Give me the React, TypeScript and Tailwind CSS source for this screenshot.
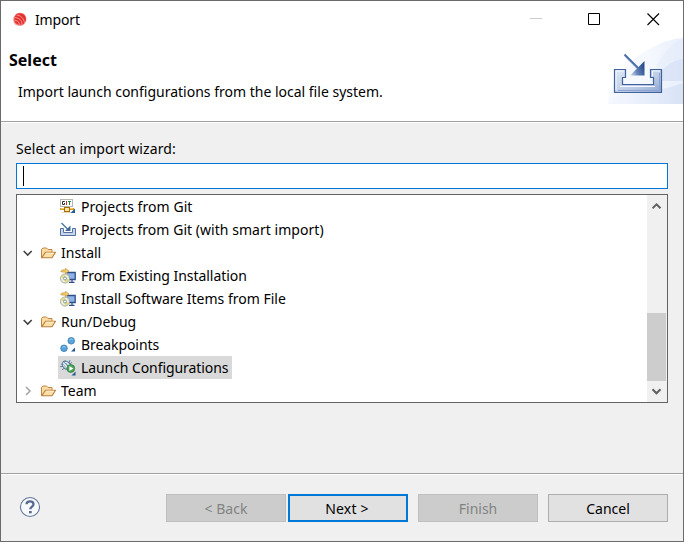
import React from "react";

const svg16 = { width: 16, height: 16, viewBox: "0 0 16 16", className: "block shrink-0" };

function AppLogo() {
  return (
    <svg width="16" height="16" viewBox="0 0 16 16" className="block shrink-0">
      <path d="M4.500 1.500C8 0 12 .8 13.700 4c1.500 3 .5 6.500-2 8.700-2.500 1.700-6 1.700-8.500-.2C1 10.500.8 7 1.600 5Z" fill="#f19a97" />
      <path d="M4.500 2C8 .3 12 1.300 13.400 4.500c1.200 2.800.3 5.500-1.600 7.300C9 13.300 5.500 13 3.600 11 1.800 9 2 4.500 4.500 2Z" fill="#e5322f" />
      <g fill="none" stroke="#f8aeaa" strokeWidth="0.8">
        <path d="M4.500 3c4.200.2 7.300 3.400 8 7.800" />
        <path d="M3 5.600c4 0 6.900 2.800 7 6.600" />
        <path d="M3 8.400c2.700.2 4.300 1.800 4.400 4.200" />
      </g>
    </svg>
  );
}

function ImportBanner() {
  return (
    <svg width="75" height="66" viewBox="0 0 75 66" className="block">
      <defs>
        <linearGradient id="wave" x1="0" x2="1" y1="0" y2="0">
          <stop offset="0" stopColor="#f6f9ff" />
          <stop offset="0.55" stopColor="#f5f8fe" />
          <stop offset="1" stopColor="#e8effb" />
        </linearGradient>
        <linearGradient id="wave2" x1="0" x2="1" y1="0" y2="0">
          <stop offset="0" stopColor="#f4f7fe" />
          <stop offset="1" stopColor="#cfdcf4" />
        </linearGradient>
        <linearGradient id="tray" x1="0" x2="1" y1="0" y2="1">
          <stop offset="0" stopColor="#dfe8f5" />
          <stop offset="0.6" stopColor="#bccbe6" />
          <stop offset="1" stopColor="#8ca5d0" />
        </linearGradient>
        <linearGradient id="arrow" x1="0" x2="1" y1="1" y2="0.6">
          <stop offset="0" stopColor="#d6e3f5" />
          <stop offset="0.5" stopColor="#6484b8" />
          <stop offset="1" stopColor="#2e5190" />
        </linearGradient>
      </defs>
      <path d="M0 66C1 48 13 31 30 18 46 7 60 1 75 0V66Z" fill="url(#wave)" />
      <path d="M42 43C48 27 56 9 75 1V43Z" fill="#dfe8f9" opacity=".3" />
      <path d="M48 43C53 30 63 23 75 21V43Z" fill="#cfdcf5" opacity=".5" />
      <path d="M0 66C3 61 8 57 18 55 40 55 58 51 75 45V66Z" fill="url(#wave2)" opacity=".65" />
      <path d="M6.500 31.500H17.500V39.500H14.500V46.500H45.500V39.500H42.500V31.500H53.500V54.500H6.500Z" fill="url(#tray)" stroke="#41629b" strokeWidth="1.200" />
      <path d="M8 52V33H16M44.500 38V33H52M12 48.500H47" fill="none" stroke="#f4f7fd" />
      <path d="M10 52.500H51.500V35" fill="none" stroke="#8ba4cf" />
      <path d="M16.500 16.500 32 32" stroke="#496da7" strokeWidth="2" />
      <path d="M16.500 18.500 29 31" stroke="#bed0e8" strokeWidth=".8" />
      <path d="M36.500 23V37.500H22Z" fill="url(#arrow)" />
    </svg>
  );
}

function GitIcon() {
  return (
    <svg {...svg16}>
      <rect x=".5" y=".5" width="12" height="7" fill="#fff" stroke="#b5b8ab" />
      <path d="M4.800 2.500H2.500V5.500H4.500V4" fill="none" stroke="#303030" />
      <path d="M6.500 2v4" stroke="#c4302b" />
      <path d="M8 2.500h3M9.500 2.500V6" fill="none" stroke="#238a42" />
      <path d="M0 10h14" stroke="#d79a24" strokeWidth="2" />
      <path d="M1 9.500h12" stroke="#f5c95b" strokeWidth="1" />
      <rect x="4.500" y="8.500" width="5" height="4" fill="#ffe596" stroke="#a76913" />
      <path d="M2 13.500h9" stroke="#d8c69d" strokeWidth=".7" />
      <path d="M15 9.500V14H10.500Z" fill="#255a94" />
    </svg>
  );
}

function ImportIcon() {
  return (
    <svg {...svg16}>
      <path d="M.5 6.500H3.500V10.500H12.500V6.500H15.500V13.500H.5Z" fill="#c9d5eb" stroke="#54709f" />
      <path d="M1.500 1 8 7.500" stroke="#456fa0" strokeWidth="1.300" />
      <path d="M10.500 3.500V9H5Z" fill="#3a6a9d" />
    </svg>
  );
}

function InstallIcon() {
  return (
    <svg {...svg16}>
      <path d="M6.500 4.500H15.200V11.500H8" fill="#8fb3e8" stroke="#304f88" strokeWidth="1.300" />
      <path d="M9 14.300h5.500M12 12v2" stroke="#304f88" strokeWidth="1.200" />
      <circle cx="5" cy="10.500" r="4.500" fill="#edf0df" stroke="#96a38b" strokeWidth=".9" />
      <path d="M1.300 10C1.500 8 3 6.700 5 6.700V10Z" fill="#eadb7e" />
      <path d="M8.700 11C8.500 13 7 14.300 5 14.300V11Z" fill="#eadb7e" />
      <circle cx="5" cy="10.500" r="1.500" fill="#fff" stroke="#65848e" strokeWidth=".8" />
      <path d="M.8 3.500 2.200 1.900H5.500V.4L9 3 5.500 5.500V4H2.200Z" fill="#f4d36f" stroke="#c08c2c" strokeWidth=".7" />
    </svg>
  );
}

function BreakpointsIcon() {
  return (
    <svg {...svg16}>
      <circle cx="11.200" cy="3.800" r="3.300" fill="#5aa3d8" stroke="#367db5" strokeWidth=".8" />
      <circle cx="4" cy="11.300" r="3.300" fill="#5aa3d8" stroke="#367db5" strokeWidth=".8" />
      <path d="M9.300 3.100c.8-1.300 2.700-1.500 3.500-.2M2.200 10.600c.8-1.300 2.700-1.500 3.500-.2" stroke="#9acbea" fill="none" />
      <path d="M15 10.500v4h-4Z" fill="#255a94" />
    </svg>
  );
}

function LaunchIcon() {
  return (
    <svg {...svg16}>
      <ellipse cx="6.500" cy="5.300" rx="3.500" ry="4.700" transform="rotate(-45 6.500 5.300)" fill="#e6eff6" stroke="#5b7c9e" />
      <path d="M1 4 3.500 4.500M5 0l.3 2M2 9.500l2.500-1M10 0 9 3M3 1l7.500 8M0 6.500h3M12 2.500 9.500 4" stroke="#486a8f" strokeWidth=".8" />
      <path d="M6 3l3 4M4 5l3 4" stroke="#7896b3" strokeWidth=".8" />
      <circle cx="10.800" cy="8.500" r="3.900" fill="#48a354" stroke="#2a7d3c" strokeWidth=".7" />
      <path d="M9.400 6v5l4-2.500Z" fill="#fff" />
      <path d="M15.500 11.500V15.500h-4Z" fill="#255a94" />
    </svg>
  );
}

function FolderIcon() {
  return (
    <svg {...svg16}>
      <path d="M1.500 12.500V4.500L3 3h3.500L8 4.500h4v3" fill="#fbdca4" stroke="#c08543" />
      <path d="M1.700 12.700 5.500 7.200h10L12 12.700Z" fill="#fbdfa6" stroke="#b87d3d" strokeWidth="1.100" strokeLinejoin="round" />
      <path d="M6 8.200h8" stroke="#fff0c8" />
    </svg>
  );
}

function TreeChevron({ open }: { open: boolean }) {
  return (
    <svg width="10" height="10" viewBox="0 0 10 10" className="block shrink-0">
      {open ? (
        <path d="M.7 3 4.700 7 8.700 3" fill="none" stroke="#404040" strokeWidth="1.600" />
      ) : (
        <path d="M3 1 7 5 3 9" fill="none" stroke="#a3a3a3" strokeWidth="1.500" />
      )}
    </svg>
  );
}

function Group({ label, open = true }: { label: string; open?: boolean }) {
  return (
    <div className="flex h-[23px] items-center pl-[6px]">
      <TreeChevron open={open} />
      <span className="ml-[7px]"><FolderIcon /></span>
      <span className="ml-[5px]">{label}</span>
    </div>
  );
}

function Item({ icon, label, selected = false, spacing = "" }: { icon: React.ReactNode; label: string; selected?: boolean; spacing?: string }) {
  return (
    <div className="flex h-[23px] pl-[41px]">
      <div className={`flex items-center pl-[2px] pr-[3px] ${selected ? "w-[174px] bg-[#d9d9d9]" : ""}`}>
        {icon}
        <span className={`ml-[5px] ${spacing}`}>{label}</span>
      </div>
    </div>
  );
}

function ScrollArrow({ up = false }: { up?: boolean }) {
  return (
    <svg width="10" height="8" viewBox="0 0 10 8" className="block">
      <path d={up ? "M.5 6.300 4.500 2.300 8.500 6.300" : "M.5 1.300 4.500 5.300 8.500 1.300"} fill="none" stroke="#606060" strokeWidth="2" />
    </svg>
  );
}

export default function App() {
  return (
    <div className="flex h-[542px] w-[684px] flex-col whitespace-nowrap border border-[#6b6b6b] bg-[#f0f0f0] font-['Noto_Sans','Open_Sans',sans-serif] text-[14px] leading-5 text-black">
      <header className="flex h-[120px] shrink-0 flex-col bg-white">
        <div className="flex h-[37px] shrink-0 items-center pl-[11px]">
          <AppLogo />
          <span className="ml-[7px] tracking-[-0.15px]">Import</span>
          <div className="ml-auto flex items-center gap-[46px] pr-[23px]">
            <svg width="13" height="13" viewBox="0 0 13 13"><path d="M1 5.500h12" stroke="#ccc" /></svg>
            <svg width="13" height="13" viewBox="0 0 13 13"><path d="M.5.5h11v11H.5Z" fill="none" stroke="#000" /></svg>
            <svg width="13" height="13" viewBox="0 0 13 13"><path d="M.5.5 12 12M12 .5.5 12" stroke="#000" strokeWidth="1.100" /></svg>
          </div>
        </div>
        <div className="flex flex-1 justify-between">
          <div className="pt-3">
            <h1 className="pl-2 text-[16px] font-bold leading-5">Select</h1>
            <p className="mt-3 pl-[17px]">Import launch configurations from the local file system.</p>
          </div>
          <ImportBanner />
        </div>
      </header>
      <main className="flex h-[352px] shrink-0 flex-col border-t border-[#a0a0a0]">
        <div className="h-px shrink-0 bg-white" />
        <div className="px-[15px] pt-4">
          <label className="block h-6 tracking-[0.08px]">Select an import wizard:</label>
          <div className="flex h-[26px] items-center border border-[#0078d7] bg-white pl-[6px]">
            <div className="h-5 w-px bg-black" />
          </div>
          <div className="mt-[5px] flex h-[209px] border border-[#646464] bg-white">
            <div className="flex-1">
              <Item icon={<GitIcon />} label="Projects from Git" spacing="tracking-[0.06px]" />
              <Item icon={<ImportIcon />} label="Projects from Git (with smart import)" spacing="tracking-[0.04px]" />
              <Group label="Install" />
              <Item icon={<InstallIcon />} label="From Existing Installation" spacing="tracking-[-0.04px]" />
              <Item icon={<InstallIcon />} label="Install Software Items from File" />
              <Group label="Run/Debug" />
              <Item icon={<BreakpointsIcon />} label="Breakpoints" spacing="tracking-[-0.08px]" />
              <Item icon={<LaunchIcon />} label="Launch Configurations" spacing="tracking-[-0.08px]" selected />
              <Group label="Team" open={false} />
            </div>
            <div className="flex w-5 flex-col items-center bg-[#f0f0f0]">
              <div className="flex h-[21px] items-center"><ScrollArrow up /></div>
              <div className="mt-[97px] h-[68px] w-[19px] self-start bg-[#cdcdcd]" />
              <div className="flex h-[21px] items-center"><ScrollArrow /></div>
            </div>
          </div>
        </div>
      </main>
      <footer className="flex flex-1 flex-col border-t border-[#a0a0a0]">
        <div className="h-px bg-white" />
        <div className="flex items-start pl-[18px] pr-[15px] pt-[19px]">
          <svg width="22" height="22" viewBox="0 0 22 22" className="mt-[2px]">
            <circle cx="11" cy="11" r="9.500" fill="#f8f9fc" stroke="#61779b" strokeWidth="1.100" />
            <path d="M7.600 8.200C7.600 6.200 9 5.300 11 5.300s3.500 1.100 3.500 2.900c0 2.300-3.200 2.400-3.200 5" fill="none" stroke="#56698f" strokeWidth="2.300" />
            <path d="M10 15h2.700v2.300H10Z" fill="#56698f" />
          </svg>
          <div className="ml-auto flex">
            <button className="h-7 w-[120px] border border-[#bfbfbf] bg-[#ccc] pt-[2px] text-[#838383]">&lt; Back</button>
            <button className="ml-[2px] h-7 w-[120px] border-2 border-[#0078d7] bg-[#e1e1e1] pr-[2px] pt-[2px] tracking-[0.2px]">Next &gt;</button>
            <button className="ml-[10px] h-7 w-[120px] border border-[#bfbfbf] bg-[#ccc] pt-[2px] text-[#838383]">Finish</button>
            <button className="ml-[10px] h-7 w-[120px] border border-[#adadad] bg-[#e1e1e1] pt-[2px]">Cancel</button>
          </div>
        </div>
      </footer>
    </div>
  );
}
